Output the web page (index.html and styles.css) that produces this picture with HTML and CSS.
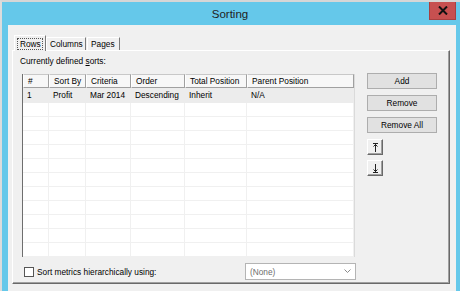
FILE: index.html
```html
<!DOCTYPE html>
<html lang="en">
<head>
    <meta charset="UTF-8">
    <title>Sorting</title>
    <link rel="stylesheet" href="styles.css">
</head>
<body>
    <div class="window">
        <div class="titlebar">
            <span></span>
            <span class="title">Sorting</span>
            <div class="close">
                <svg width="10" height="9" viewBox="0 0 10 9"><path d="M1 0.5 L9 8.5 M9 0.5 L1 8.5" stroke="#111" stroke-width="2"/></svg>
            </div>
        </div>
        <div class="client">
            <div class="tabs">
                <div class="tab active"><span class="focus">Rows</span></div>
                <div class="tab">Columns</div>
                <div class="tab">Pages</div>
            </div>
            <div class="panel">
                <div class="caption">Currently defined <u>s</u>orts:</div>
                <div class="main">
                    <div class="list">
                        <div class="list-row head">
                            <div>#</div><div>Sort By</div><div>Criteria</div><div>Order</div><div>Total Position</div><div>Parent Position</div>
                        </div>
                        <div class="list-row first">
                            <div>1</div><div>Profit</div><div>Mar 2014</div><div>Descending</div><div>Inherit</div><div>N/A</div>
                        </div>
                        <div class="list-row"><div></div><div></div><div></div><div></div><div></div><div></div></div>
                        <div class="list-row"><div></div><div></div><div></div><div></div><div></div><div></div></div>
                        <div class="list-row"><div></div><div></div><div></div><div></div><div></div><div></div></div>
                        <div class="list-row"><div></div><div></div><div></div><div></div><div></div><div></div></div>
                        <div class="list-row"><div></div><div></div><div></div><div></div><div></div><div></div></div>
                        <div class="list-row"><div></div><div></div><div></div><div></div><div></div><div></div></div>
                        <div class="list-row"><div></div><div></div><div></div><div></div><div></div><div></div></div>
                        <div class="list-row"><div></div><div></div><div></div><div></div><div></div><div></div></div>
                        <div class="list-row"><div></div><div></div><div></div><div></div><div></div><div></div></div>
                        <div class="list-row"><div></div><div></div><div></div><div></div><div></div><div></div></div>
                        <div class="list-row"><div></div><div></div><div></div><div></div><div></div><div></div></div>
                    </div>
                    <div class="buttons">
                        <div class="btn">Add</div>
                        <div class="btn">Remove</div>
                        <div class="btn">Remove All</div>
                        <div class="arrow-btn">
                            <svg width="7" height="9" viewBox="0 0 7 9"><path d="M1 0.5 H6 M3.5 1 V9 M1.5 3.5 L3.5 1.5 M5.5 3.5 L3.5 1.5" stroke="#222" stroke-width="1" fill="none"/></svg>
                        </div>
                        <div class="arrow-btn down">
                            <svg width="7" height="9" viewBox="0 0 7 9"><path d="M1 8.5 H6 M3.5 0 V8 M1.5 5.5 L3.5 7.5 M5.5 5.5 L3.5 7.5" stroke="#222" stroke-width="1" fill="none"/></svg>
                        </div>
                    </div>
                </div>
                <div class="bottom">
                    <div class="check"></div>
                    <span class="check-label">Sort metrics hierarchically using:</span>
                    <div class="combo">
                        <span>(None)</span>
                        <svg width="7" height="5" viewBox="0 0 7 5"><path d="M0.5 0.5 L3.5 3.5 L6.5 0.5" stroke="#8a8a8a" stroke-width="1" fill="none"/></svg>
                    </div>
                </div>
            </div>
        </div>
    </div>
</body>
</html>
```

FILE: styles.css
```css
body {
    margin: 0;
    padding: 0;
    width: 460px;
    height: 291px;
    overflow: hidden;
    font-family: "Liberation Sans", Arial, sans-serif;
    font-size: 8.3px;
    color: #000;
}
.window {
    height: 291px;
    box-sizing: border-box;
    background: #65c8ea;
    border-top: 2px solid #d6d6d6;
    border-left: 2px solid #dcdcdc;
    display: flex;
    flex-direction: column;
}
.titlebar {
    height: 23px;
    display: grid;
    grid-template-columns: 1fr auto 1fr;
    align-items: center;
}
.title {
    font-size: 11.5px;
    color: #222;
    margin-left: -2px;
}
.close {
    justify-self: end;
    align-self: start;
    width: 27px;
    height: 18px;
    margin-right: 4px;
    background: #c75050;
    border: 1px solid #a84040;
    border-top: none;
    box-sizing: border-box;
    display: flex;
    align-items: center;
    justify-content: center;
}
.client {
    flex: 1;
    margin: 0 4px 0 6px;
    background: #f0f0f0;
    padding: 10px 6px 7px 4px;
    display: flex;
    flex-direction: column;
}
/* tabs */
.tabs {
    display: flex;
    align-items: flex-end;
    height: 15px;
    margin-left: 2px;
    position: relative;
    z-index: 1;
}
.tab {
    height: 13px;
    box-sizing: border-box;
    padding: 0 3px;
    line-height: 12px;
    border: 1px solid #fff;
    border-right-color: #7a7a7a;
    border-bottom: none;
    background: #f0f0f0;
}
.tab.active {
    height: 16px;
    margin-bottom: -1px;
    padding: 2px 2px 0;
    width: 32px;
}
.tab:nth-child(2) { width: 40px; }
.tab:nth-child(3) { width: 33px; margin-left: 1px; }
.focus {
    display: block;
    border: 1px dotted #555;
    line-height: 10px;
    padding: 0 2px;
}
.panel {
    flex: 1;
    border: 1px solid #fff;
    border-right-color: #696969;
    border-bottom-color: #696969;
    box-shadow: inset -1px -1px #a0a0a0;
    padding: 5px 0 0 7px;
    display: flex;
    flex-direction: column;
}
.caption {
    line-height: 11px;
}
.caption u { text-decoration: underline; }
.main {
    display: flex;
    margin-top: 7px;
    margin-left: 2px;
}
/* list view */
.list {
    width: 333px;
    height: 183px;
    box-sizing: border-box;
    background: #fff;
    border-left: 1px solid #6e6e6e;
    border-right: 1px solid #dadada;
    overflow: hidden;
}
.list-row {
    display: grid;
    grid-template-columns: 26px 37px 45px 54px 62px 1fr;
    height: 14px;
}
.list-row div {
    border-right: 1px solid #f0f0f0;
    border-bottom: 1px solid #f0f0f0;
    padding-left: 4px;
    line-height: 14px;
    white-space: nowrap;
    overflow: hidden;
}
.list-row.head div {
    background: #f7f7f7;
    border: 1px solid #a0a0a0;
    border-left-color: #fff;
    border-top-color: #c8c8c8;
    line-height: 12px;
}
.list-row.first {
    height: 15px;
    background: #ececec;
}
.list-row.first div {
    line-height: 15px;
    border-color: #ececec;
}
/* buttons */
.buttons {
    margin-left: 12px;
    margin-top: -1px;
    width: 70px;
    display: flex;
    flex-direction: column;
    gap: 6px;
}
.btn {
    height: 16px;
    box-sizing: border-box;
    background: #e1e1e1;
    border: 1px solid #adadad;
    text-align: center;
    line-height: 14px;
}
.arrow-btn {
    width: 16px;
    height: 16px;
    box-sizing: border-box;
    background: #f0f0f0;
    border: 1px solid #fff;
    border-right-color: #696969;
    border-bottom-color: #696969;
    box-shadow: inset -1px -1px #a0a0a0;
    display: flex;
    align-items: center;
    justify-content: center;
}
.arrow-btn.down { margin-top: -1px; }
/* bottom row */
.bottom {
    display: flex;
    align-items: center;
    width: 334px;
    height: 17px;
    margin-top: 6px;
    margin-left: 2px;
}
.check {
    width: 10px;
    height: 10px;
    box-sizing: border-box;
    margin-left: 2px;
    border: 1px solid #555;
    background: #fff;
}
.check-label {
    margin-left: 3px;
}
.combo {
    margin-left: auto;
    width: 111px;
    height: 17px;
    box-sizing: border-box;
    background: #fff;
    border: 1px solid #b4b4b4;
    display: flex;
    align-items: center;
    justify-content: space-between;
    padding: 0 4px 0 4px;
    color: #6d6d6d;
}
```
